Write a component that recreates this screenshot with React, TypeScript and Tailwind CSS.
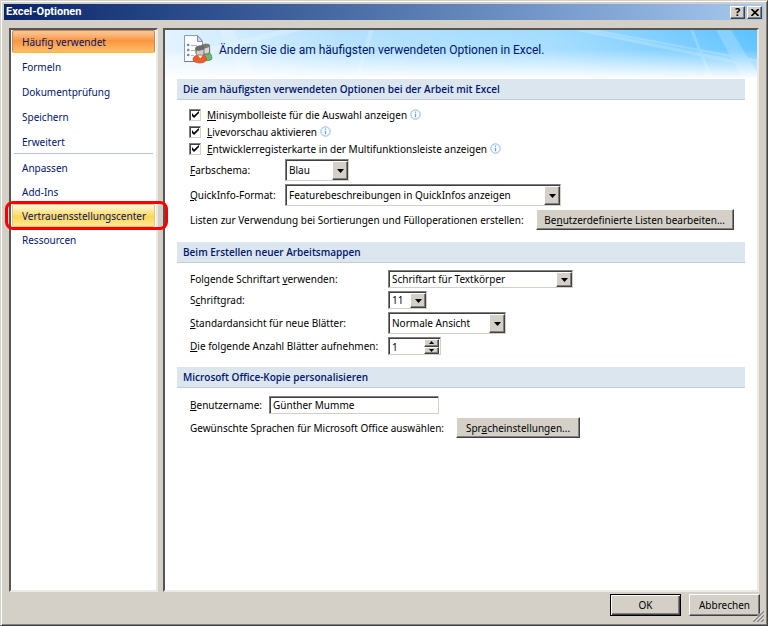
import type { ReactNode } from "react";

const raised =
  "border border-t-white border-l-white border-r-[#404040] border-b-[#404040] bg-[#d4d0c8] shadow-[inset_-1px_-1px_0_#808080]";
const sunken =
  "border border-t-[#808080] border-l-[#808080] border-r-[#d4d0c8] border-b-[#d4d0c8] bg-white shadow-[inset_1px_1px_0_#404040]";

const navTop = ["Häufig verwendet", "Formeln", "Dokumentprüfung", "Speichern", "Erweitert"];
const navBottom = ["Anpassen", "Add-Ins", "Vertrauensstellungscenter", "Ressourcen"];

const InfoIcon = () => (
  <svg width="11" height="11" viewBox="0 0 11 11" fill="none" className="ml-[3px] shrink-0">
    <circle cx="5.5" cy="5.5" r="4.7" stroke="#8fb8e0" fill="#f6fbff" />
    <path d="M5.500 2.500v1.300M5.500 4.700v3.600" stroke="#6f9fd8" strokeWidth="1.200" />
  </svg>
);

const PageIcon = () => (
  <svg width="32" height="32" viewBox="0 0 32 32" className="shrink-0">
    <path d="M3.500 1.500h13l5 6v20h-18z" fill="#fafcff" stroke="#8c9bb8" />
    <path d="M16.500 1.500v6h5z" fill="#d4deed" stroke="#7d8fae" strokeLinejoin="round" />
    <path d="M3.500 27.500h18" stroke="#6d7c9a" />
    <g fill="#7382a5">
      <circle cx="7.200" cy="11" r="1.300" />
      <circle cx="7.200" cy="16" r="1.300" />
      <circle cx="7.200" cy="21" r="1.300" />
    </g>
    <path d="M10 11.500h6M10 16.500h4M10 21.500h3" stroke="#a9b5cb" />
    <path d="M22 26c0-6 2-8 4.500-8s4.500 3 4.500 7c-2 2-6 2-9 1z" fill="#6fb573" stroke="#3f8a4c" strokeWidth="0.700" />
    <path d="M20.500 11.500c1-1.500 7-2 8-.5l.3 7c-1 3-6.500 3-7.500 0z" fill="#7b7b7b" stroke="#666" strokeWidth="0.700" />
    <path d="M22 14c2 1 4 0 6-1v5c-1 2-5 2-6 0z" fill="#dad8d6" />
    <path d="M14.500 14c1-2.500 7.500-3 8.500-.5v6c-1 3-7 3-8 0z" fill="#6c6c6c" stroke="#5c5c5c" strokeWidth="0.700" />
    <path d="M15.500 16.500c2 .8 4 .3 7-1v4.500c-1 2.200-6 2.200-7 0z" fill="#cfcdcb" />
    <path d="M12 26c0-3.500 2.500-5 7-5s6.500 1.500 6.500 5c-2 4-11.500 4-13.500 0z" fill="#ee5a2a" stroke="#c8481f" strokeWidth="0.700" />
    <path d="M17 21.500l2.300 3 2.300-3z" fill="#fff" />
  </svg>
);

const Heading = ({ children }: { children: ReactNode }) => (
  <h2 className="flex h-[21px] items-center border-b border-[#c6cdd3] bg-[#dce6ee] px-[6px] font-['Open_Sans','Noto_Sans',sans-serif] text-[10px] font-semibold text-[#00156e]">
    {children}
  </h2>
);

type CheckProps = { id: string; children: ReactNode };

const Check = ({ id, children }: CheckProps) => (
  <div className="flex h-[17px] items-center">
    <span className="relative mr-[6px] h-3 w-3">
      <input
        id={id}
        type="checkbox"
        defaultChecked
        className={`block h-3 w-3 appearance-none ${sunken}`}
      />
      <svg viewBox="0 0 12 12" className="pointer-events-none absolute inset-0 h-3 w-3">
        <path d="M3 4v3l2 2 5-5V2L5 6.500z" fill="#000" />
      </svg>
    </span>
    <label htmlFor={id}>{children}</label>
    <InfoIcon />
  </div>
);

type PickProps = { id: string; value: string; size: string };

const Pick = ({ id, value, size }: PickProps) => (
  <span className={`relative ${size}`}>
    <select id={id} className={`block h-full w-full appearance-none pr-5 pl-[3px] outline-none ${sunken}`}>
      <option>{value}</option>
    </select>
    <span className={`pointer-events-none absolute top-[2px] right-[1px] bottom-[1px] flex w-4 items-center justify-center ${raised}`}>
      <svg width="7" height="4" viewBox="0 0 7 4">
        <path d="M0 0h7L3.500 4z" fill="#000" />
      </svg>
    </span>
  </span>
);

const NavItem = ({ name }: { name: string }) => {
  const base = "relative flex h-[23px] w-full items-center border pl-[9px] text-left";
  if (name === "Häufig verwendet") {
    return (
      <button className={`${base} rounded-xs border-[#c08a5c] border-b-[#ffb52e] bg-linear-to-b from-[#f9c08a] from-10% via-[#fb9640] via-45% to-[#fdbc68]`}>
        {name}
      </button>
    );
  }
  if (name === "Vertrauensstellungscenter") {
    return (
      <button className={`${base} rounded-xs border-[#dfc877] bg-linear-to-b from-[#fffbe0] via-[#ffd54f] via-55% to-[#ffe794]`}>
        {name}
        <span className="pointer-events-none absolute -top-[4px] -right-[14px] -bottom-[4px] -left-[8px] rounded-lg border-3 border-[#fb0000]" />
      </button>
    );
  }
  return <button className={`${base} border-transparent`}>{name}</button>;
};

const Banner = () => (
  <svg viewBox="0 0 593 50" preserveAspectRatio="none" className="absolute inset-0 h-full w-full">
    <defs>
      <linearGradient id="sky">
        <stop offset="0" stopColor="#e2f3ff" />
        <stop offset="0.3" stopColor="#b4e1fe" />
        <stop offset="0.65" stopColor="#a2dcff" />
        <stop offset="1" stopColor="#5cc1ff" />
      </linearGradient>
      <linearGradient id="fade" x1="0" y1="0" x2="0" y2="1">
        <stop offset="0" stopColor="#fff" stopOpacity="0" />
        <stop offset="0.4" stopColor="#fff" stopOpacity="0.08" />
        <stop offset="1" stopColor="#fff" />
      </linearGradient>
    </defs>
    <path d="M0 0h593v50H0z" fill="url(#sky)" />
    <g fill="#fff" fillOpacity="0.200">
      <path d="M54 0h14l25 50H78zM0 28L115 0h22L0 36zM190 50L205 0h4L194 50z" />
      <path d="M408 0h16l160 33v4zM424 0h10l159 30v3zM552 0h15l26 43v7h-14zM526 0h3l20 50h-3z" />
    </g>
    <path d="M0 0h593v50H0z" fill="url(#fade)" />
  </svg>
);

const App = () => {
  return (
    <div className="flex min-h-screen flex-col border border-t-[#d4d0c8] border-l-[#d4d0c8] border-r-[#404040] border-b-[#404040] bg-[#d4d0c8] p-[3px] font-['Noto_Sans','Open_Sans',sans-serif] text-[10px] leading-[14px] text-black shadow-[inset_1px_1px_0_#fff,inset_-1px_-1px_0_#808080]">
      <header className="flex h-4 items-center justify-between bg-linear-to-r from-[#0a246a] to-[#a6caf0] px-[2px]">
        <h1 className="font-[Roboto,'Noto_Sans',sans-serif] text-[11px] font-bold text-white">Excel-Optionen</h1>
        <div className="flex gap-[2px]">
          <button aria-label="Hilfe" className={`flex h-[13px] w-[15px] items-center justify-center text-[11px] font-bold ${raised}`}>
            ?
          </button>
          <button aria-label="Schließen" className={`flex h-[13px] w-[15px] items-center justify-center ${raised}`}>
            <svg width="8" height="7" viewBox="0 0 8 7">
              <path d="M0.500 0l7 7M7.500 0l-7 7" stroke="#000" strokeWidth="1.600" />
            </svg>
          </button>
        </div>
      </header>

      <div className="flex flex-1 gap-[5px] px-[5px] pt-2 pb-[2px]">
        <nav className="w-[149px] shrink-0 border-2 border-t-[#555] border-l-[#555] border-r-[#ece9e4] border-b-[#ece9e4] bg-white px-px text-[#00156e]">
          <div className="flex flex-col gap-[2px]">
            {navTop.map((name) => (
              <NavItem key={name} name={name} />
            ))}
          </div>
          <hr className="mx-[2px] border-[#bcc3cd]" />
          <div className="mt-[2px] flex flex-col gap-px">
            {navBottom.map((name) => (
              <NavItem key={name} name={name} />
            ))}
          </div>
        </nav>

        <main className="min-w-0 flex-1 border-2 border-t-[#555] border-l-[#555] border-r-[#ece9e4] border-b-[#ece9e4] bg-white">
          <div className="relative flex h-[49px] items-start pt-1 pl-4">
            <Banner />
            <div className="relative flex items-center gap-[6px]">
              <PageIcon />
              <p className="font-[Roboto,'Noto_Sans',sans-serif] text-[12px] text-[#00156e]">
                Ändern Sie die am häufigsten verwendeten Optionen in Excel.
              </p>
            </div>
          </div>

          <div className="px-3">
            <Heading>Die am häufigsten verwendeten Optionen bei der Arbeit mit Excel</Heading>
            <div className="pt-[6px] pl-3">
              <Check id="mini">
                <u>M</u>inisymbolleiste für die Auswahl anzeigen
              </Check>
              <Check id="live">
                <u>L</u>ivevorschau aktivieren
              </Check>
              <Check id="dev">
                <u>E</u>ntwicklerregisterkarte in der Multifunktionsleiste anzeigen
              </Check>
            </div>
            <div className="flex flex-col gap-[3px] pt-[2px] pb-3 pl-[13px]">
              <div className="flex items-center">
                <label htmlFor="scheme" className="w-[95px]">
                  <u>F</u>arbschema:
                </label>
                <Pick id="scheme" value="Blau" size="w-16 h-[22px]" />
              </div>
              <div className="flex items-center">
                <label htmlFor="tips" className="w-[95px]">
                  <u>Q</u>uickInfo-Format:
                </label>
                <Pick id="tips" value="Featurebeschreibungen in QuickInfos anzeigen" size="w-[276px] h-[22px]" />
              </div>
              <div className="flex items-center gap-3">
                <span className="shrink-0">Listen zur Verwendung bei Sortierungen und Fülloperationen erstellen:</span>
                <button className={`h-[21px] w-[198px] whitespace-nowrap ${raised}`}>
                  Be<u>n</u>utzerdefinierte Listen bearbeiten...
                </button>
              </div>
            </div>

            <Heading>Beim Erstellen neuer Arbeitsmappen</Heading>
            <div className="flex flex-col gap-[3px] pt-[7px] pb-3 pl-[13px]">
              <div className="flex items-center">
                <label htmlFor="font" className="w-[198px]">
                  Folgende Schriftart <u>v</u>erwenden:
                </label>
                <Pick id="font" value="Schriftart für Textkörper" size="w-[185px] h-[18px]" />
              </div>
              <div className="flex items-center">
                <label htmlFor="size" className="w-[198px]">
                  S<u>c</u>hriftgrad:
                </label>
                <Pick id="size" value="11" size="w-[39px] h-[18px]" />
              </div>
              <div className="flex items-center">
                <label htmlFor="view" className="w-[198px]">
                  <u>S</u>tandardansicht für neue Blätter:
                </label>
                <Pick id="view" value="Normale Ansicht" size="w-[118px] h-[22px]" />
              </div>
              <div className="flex items-center">
                <label htmlFor="sheets" className="w-[198px]">
                  <u>D</u>ie folgende Anzahl Blätter aufnehmen:
                </label>
                <span className={`flex h-[18px] w-[53px] pt-px pr-px ${sunken}`}>
                  <input id="sheets" defaultValue="1" className="w-0 flex-1 pl-[3px] outline-none" />
                  <span className="flex w-[15px] flex-col">
                    <button aria-label="Mehr" className={`flex flex-1 items-center justify-center ${raised}`}>
                      <svg width="5" height="3" viewBox="0 0 5 3">
                        <path d="M0 3h5L2.500 0z" />
                      </svg>
                    </button>
                    <button aria-label="Weniger" className={`flex flex-1 items-center justify-center ${raised}`}>
                      <svg width="5" height="3" viewBox="0 0 5 3">
                        <path d="M0 0h5L2.500 3z" />
                      </svg>
                    </button>
                  </span>
                </span>
              </div>
            </div>

            <Heading>Microsoft Office-Kopie personalisieren</Heading>
            <div className="flex flex-col gap-[3px] pt-2 pl-[13px]">
              <div className="flex items-center">
                <label htmlFor="user" className="w-[79px]">
                  <u>B</u>enutzername:
                </label>
                <input id="user" defaultValue="Günther Mumme" className={`h-[18px] w-[170px] pl-[3px] outline-none ${sunken}`} />
              </div>
              <div className="flex items-center gap-3">
                <span className="shrink-0">Gewünschte Sprachen für Microsoft Office auswählen:</span>
                <button className={`h-[21px] w-[124px] whitespace-nowrap ${raised}`}>
                  Spr<u>a</u>cheinstellungen...
                </button>
              </div>
            </div>
          </div>
        </main>
      </div>

      <footer className="relative flex h-7 justify-end gap-2 pr-1">
        <button className="h-[22px] w-[71px] border border-black bg-[#d4d0c8] shadow-[inset_1px_1px_0_#fff,inset_-1px_-1px_0_#404040,inset_-2px_-2px_0_#808080]">
          OK
        </button>
        <button className={`h-[22px] w-[71px] ${raised}`}>Abbrechen</button>
        <svg width="11" height="11" viewBox="0 0 11 11" className="absolute right-0 bottom-0">
          <path d="M0 11L11 0M4 11l7-7M8 11l3-3" stroke="#808080" strokeWidth="1.500" />
          <path d="M-1 10.500L10.500 -1M3 10.500L11 2.500M7 10.500l4-4" stroke="#fff" strokeWidth="0.700" />
        </svg>
      </footer>
    </div>
  );
};

export default App;
